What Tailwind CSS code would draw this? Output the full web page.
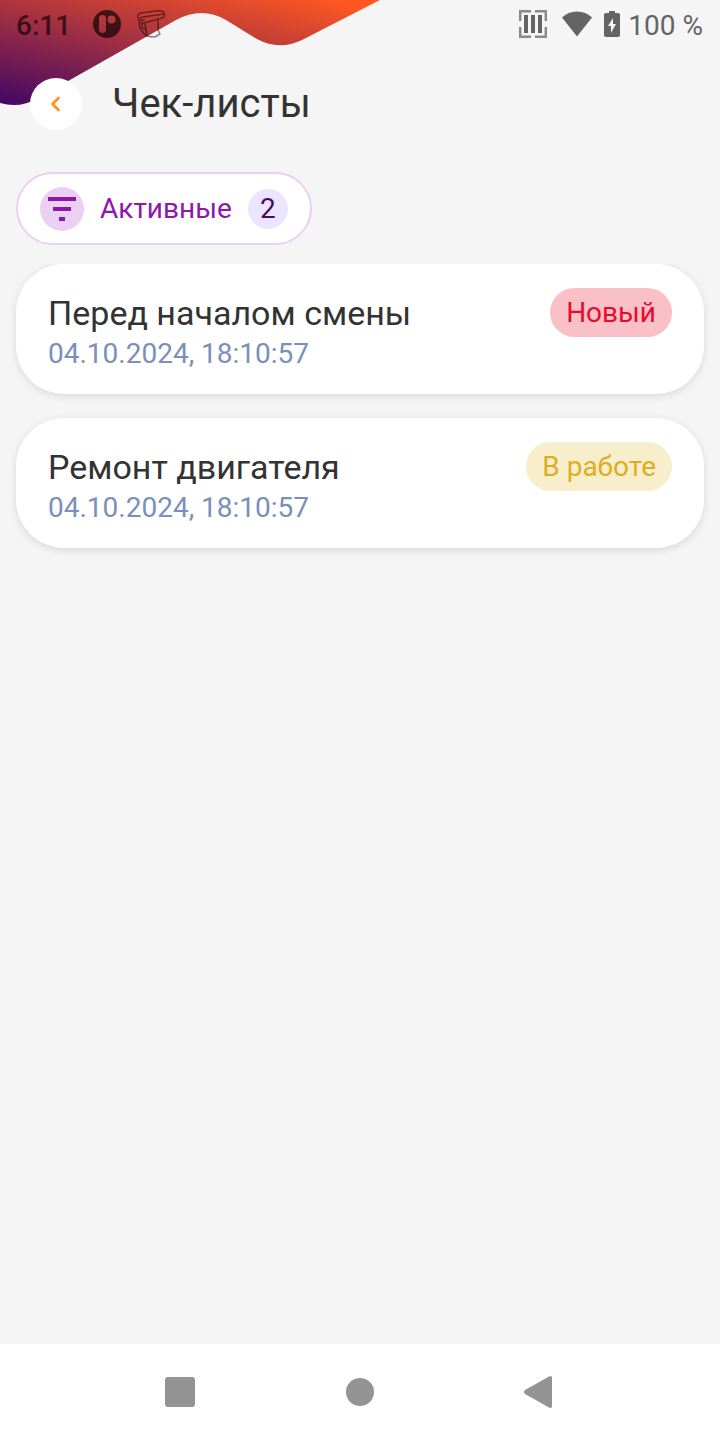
<!DOCTYPE html>
<html lang="ru">
<head>
  <meta charset="UTF-8" />
  <meta name="viewport" content="width=device-width, initial-scale=1" />
  <title>Чек-листы</title>
  <script src="https://cdn.jsdelivr.net/npm/@tailwindcss/browser@4"></script>
</head>
<body class="relative flex min-h-screen flex-col overflow-x-hidden bg-[#f5f5f5] font-['Roboto',sans-serif] text-[#333333]">
  <!-- Decorative wave -->
  <svg class="absolute top-0 left-0 -z-10" width="380" height="107" viewBox="0 0 380 107" aria-hidden="true">
    <defs>
      <linearGradient id="wave" gradientUnits="userSpaceOnUse" x1="0" y1="98" x2="38" y2="-68">
        <stop offset="0" stop-color="#480a62" />
        <stop offset="1" stop-color="#ff5722" />
      </linearGradient>
    </defs>
    <path fill="url(#wave)" d="M0 0H380L302 40Q279 51 257 39L226 20Q202 6 176 20L38 98Q20 109 0 103Z" />
  </svg>

  <!-- Status bar -->
  <div class="flex h-12 items-center justify-between pt-1 pr-[17px] pl-4 text-[28px] leading-8">
    <div class="flex items-center text-black/65">
      <span class="font-medium">6:11</span>
      <svg class="ml-[21px] -mt-1" width="30" height="30" viewBox="0 0 30 30" fill="currentColor" aria-hidden="true">
        <path fill-rule="evenodd" d="M15 1a14 14 0 1 1 0 28a14 14 0 1 1 0-28ZM10.500 6Q7 6 7 9.500V20.500Q7 24 10.500 24Q14 24 14 20.500V9.500Q14 6 10.500 6ZM19.500 6.500a4 4 0 1 0 0 8a4 4 0 1 0 0-8Z" />
      </svg>
      <svg class="ml-[14px] -mt-1 opacity-70" width="30" height="30" viewBox="0 0 30 30" fill="none" stroke="currentColor" stroke-width="1.500" stroke-linejoin="round" stroke-linecap="round" aria-hidden="true">
        <path d="M2 8Q1 5 5 4L20 2Q27 1 28 4Q30 7 26 9L8 14Q3 15 2 8ZM5 10Q4 8 7 8L28 5M5 10Q5 12 8 11" />
        <path d="M3 13Q3 19 6 22L10 27L19 28L24 25L22 21V11M6 15V19L9 20M9 15L11 26L14 28" />
      </svg>
    </div>
    <div class="flex items-center text-[#646464]">
      <svg class="-mt-1" width="28" height="28" viewBox="0 0 28 28" fill="none" stroke="currentColor" aria-hidden="true">
        <path stroke-width="2.400" d="M1.200 11V1.200H12M16 1.200H26.800V11M26.800 17V26.800H16M12 26.800H1.200V17" opacity=".75" />
        <path stroke-width="4" d="M7 5V23M14 5V23M21 5V23" />
      </svg>
      <svg class="ml-[15px] -mt-1" width="30" height="26" viewBox="0 0 30 26" fill="currentColor" aria-hidden="true">
        <path d="M15 25.500L0 6.500Q6 .5 15 .5T30 6.500Z" />
      </svg>
      <svg class="ml-3 -mt-1" width="16" height="27" viewBox="0 0 16 27" aria-hidden="true">
        <path fill="currentColor" d="M5 0H11V2H14Q16 2 16 4V24Q16 26 14 26H2Q0 26 0 24V4Q0 2 2 2H5Z" />
        <path fill="#f5f5f5" d="M9 7L4 15H7V22L12 13H9Z" />
      </svg>
      <span class="ml-2">100 %</span>
    </div>
  </div>

  <header class="flex h-28 items-center gap-[30px] px-[30px]">
    <button type="button" aria-label="Назад" class="flex size-[52px] items-center justify-center rounded-full bg-white">
      <svg width="24" height="24" viewBox="0 0 24 24" fill="none" stroke="#ff9224" stroke-width="2.800" stroke-linecap="round" stroke-linejoin="round" aria-hidden="true">
        <path d="M14.500 6L8.500 12L14.500 18" />
      </svg>
    </button>
    <h1 class="text-[40px] leading-[50px]">Чек-листы</h1>
  </header>

  <main class="flex-1 px-4 pt-3">
    <button type="button" class="flex h-[73px] items-center gap-4 rounded-full border-2 border-[#ead0f2] bg-white px-[22px] text-[28px] leading-8 text-[#8e16ad]">
      <span class="flex size-11 items-center justify-center rounded-full bg-[#ead0f2]">
        <svg width="28" height="24" viewBox="0 0 28 24" fill="currentColor" aria-hidden="true">
          <path d="M0 0H28V4H0ZM5 10H23V14H5ZM11 20H17V24H11Z" />
        </svg>
      </span>
      <span>Активные</span>
      <span class="flex size-10 items-center justify-center rounded-full bg-[#ede5ff] text-[#4b0a60]">2</span>
    </button>

    <ul class="-mx-4 mt-[19px] flex flex-col gap-6 overflow-hidden px-4 pb-4">
      <li class="rounded-[48px] bg-white px-8 py-6 shadow-[0_2px_8px_rgba(0,0,0,0.12)]">
        <div class="flex items-center justify-between">
          <h2 class="text-[34px] leading-10">Перед началом смены</h2>
          <span class="rounded-full bg-[#f9c0c8] px-4 text-[28px] leading-[49px] text-[#ea0a2a]">Новый</span>
        </div>
        <p class="text-[28px] leading-[33px] text-[#7a8fbb]">04.10.2024, 18:10:57</p>
      </li>
      <li class="rounded-[48px] bg-white px-8 py-6 shadow-[0_2px_8px_rgba(0,0,0,0.12)]">
        <div class="flex items-center justify-between">
          <h2 class="text-[34px] leading-10">Ремонт двигателя</h2>
          <span class="rounded-full bg-[#f9eecb] px-4 text-[28px] leading-[49px] text-[#dcae22]">В работе</span>
        </div>
        <p class="text-[28px] leading-[33px] text-[#7a8fbb]">04.10.2024, 18:10:57</p>
      </li>
    </ul>
  </main>

  <!-- System navigation -->
  <nav class="grid h-24 grid-cols-3 items-center justify-items-center bg-white px-[12.5%] text-[#949494]">
    <button type="button" aria-label="Недавние">
      <svg width="30" height="30" viewBox="0 0 30 30" fill="currentColor"><rect width="30" height="30" rx="3" /></svg>
    </button>
    <button type="button" aria-label="Домой">
      <svg width="28" height="28" viewBox="0 0 28 28" fill="currentColor"><circle cx="14" cy="14" r="14" /></svg>
    </button>
    <button type="button" aria-label="Назад">
      <svg width="32" height="32" viewBox="0 0 32 32" fill="currentColor"><path d="M1 14L25 .5Q28 -1 28 2V30Q28 33 25 31.500L1 18Q-1 16 1 14Z" /></svg>
    </button>
  </nav>
</body>
</html>
